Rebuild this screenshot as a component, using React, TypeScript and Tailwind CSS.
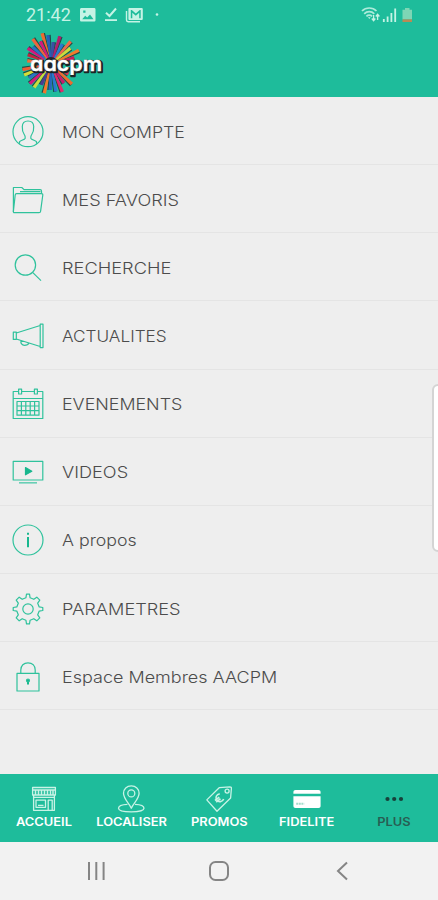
import type { ReactNode } from 'react';

interface MenuItem {
  label: string;
  icon: ReactNode;
  textClass: string;
}

interface TabItem {
  label: string;
  icon: ReactNode;
  textClass: string;
}

// [angle, inner radius, outer radius, colour]
const RAYS: [number, number, number, string][] = [
  [-172, 8, 24, '#e8743b'],
  [-158, 10, 25, '#c5223e'],
  [-146, 8, 28, '#d3187d'],
  [-137, 8, 25, '#2c6fc4'],
  [-126, 6, 31, '#f0643c'],
  [-106, 6, 32, '#ef6a2e'],
  [-115, 6, 25, '#d3187d'],
  [-96, 6, 29, '#2460b8'],
  [-84, 6, 22, '#3a4fa3'],
  [-72, 6, 29, '#b31d6e'],
  [-60, 6, 23, '#2b79cf'],
  [-49, 6, 30, '#ef6a4a'],
  [-39, 6, 25, '#c9dd3c'],
  [-26, 8, 31, '#f07a2c'],
  [-15, 8, 24, '#c71c5c'],
  [30, 6, 20, '#e0354f'],
  [44, 6, 29, '#ef6a2e'],
  [56, 6, 23, '#c71c6c'],
  [68, 6, 30, '#e02a6d'],
  [80, 6, 28, '#2b79cf'],
  [92, 6, 26, '#2a63bd'],
  [103, 6, 30, '#f0782c'],
  [115, 6, 23, '#4a3b93'],
  [126, 6, 29, '#c9dd3c'],
  [137, 6, 29, '#d3187d'],
  [148, 6, 26, '#2c6fc4'],
  [158, 8, 29, '#d5dc36'],
  [169, 8, 29, '#ee5b34'],
];

// cv11 is the single-storey a
const WORDMARK = "font-[Inter,sans-serif] text-[20px] font-semibold [font-feature-settings:'cv11'_1,'ss01'_1]";

function Logo() {
  return (
    <svg width="84" height="62" viewBox="0 0 84 62" aria-label="aacpm">
      <g transform="translate(30 31)">
        {RAYS.map(([angle, from, to, color]) => (
          <g key={angle} transform={`rotate(${angle})`}>
            <path d={`M${from} 0.6L${to} -0.6V2.8L${from} 1.6Z`} fill="#1d4e48" />
            <path d={`M${from} -0.8L${to} -1.8V1.6L${from} 1Z`} fill={color} />
          </g>
        ))}
        <circle r="7" fill="#23272e" />
      </g>
      <text
        x="10"
        y="38.7"
        textLength="72"
        lengthAdjust="spacingAndGlyphs"
        stroke="#1c2426"
        strokeWidth="2.6"
        strokeLinejoin="round"
        fill="#1c2426"
        className={WORDMARK}
      >
        aacpm
      </text>
      <text
        x="9"
        y="37.6"
        textLength="72"
        lengthAdjust="spacingAndGlyphs"
        fill="#fff"
        stroke="#fff"
        strokeWidth="0.4"
        className={WORDMARK}
      >
        aacpm
      </text>
    </svg>
  );
}

function LineIcon({ children }: { children: ReactNode }) {
  return (
    <svg
      width="32"
      height="32"
      viewBox="0 0 32 32"
      fill="none"
      stroke="#2fc29c"
      strokeWidth="1.2"
      strokeLinejoin="round"
      className="shrink-0"
    >
      {children}
    </svg>
  );
}

const GEAR =
  'M13.9 4.8L14.5 1.2H17.5L18.1 4.8L21.8 6.3L24.8 4.2L27.8 7.2L25.7 10.2L27.2 13.9L30.8 14.5V17.5L27.2 18.1L25.7 21.8L27.8 24.8L24.8 27.8L21.8 25.7L18.1 27.2L17.5 30.8H14.5L13.9 27.2L10.2 25.7L7.2 27.8L4.2 24.8L6.3 21.8L4.8 18.1L1.2 17.5V14.5L4.8 13.9L6.3 10.2L4.2 7.2L7.2 4.2L10.2 6.3Z';

const MENU: MenuItem[] = [
  {
    label: 'MON COMPTE',
    textClass: 'scale-x-[1.105]',
    icon: (
      <LineIcon>
        <circle cx="16" cy="15.7" r="15" />
        <path d="M7.5 27.8V25.8C8 24.4 12.5 24 13.2 22.2C13.7 20.5 13 19.4 12 18C10.5 16 10.2 13 10.3 10.5C10.4 7 12.6 5 16 5C19.4 5 21.6 7 21.7 10.5C21.8 13 21.5 16 20 18C19 19.4 18.3 20.5 18.8 22.2C19.5 24 24 24.4 24.5 25.8V27.8" />
      </LineIcon>
    ),
  },
  {
    label: 'MES FAVORIS',
    textClass: 'scale-x-[1.135]',
    icon: (
      <LineIcon>
        <path d="M1.4 28V3.5H9.8L12 5.6H28.2C29.2 5.6 29.5 6 29.5 7V9.6" />
        <path d="M4.6 9.6H29.4C30.5 9.6 30.9 10.2 30.8 11L28.6 27.2C28.5 28.2 28 28.7 27 28.7H2.4C1.6 28.7 1.3 28.2 1.4 27.2L3.2 11C3.3 10 3.8 9.6 4.6 9.6ZM8 7.6H28.5" />
      </LineIcon>
    ),
  },
  {
    label: 'RECHERCHE',
    textClass: 'scale-x-[1.14]',
    icon: (
      <LineIcon>
        <circle cx="13.4" cy="13" r="10.2" />
        <path d="M20.6 20.4L29 28.6" />
      </LineIcon>
    ),
  },
  {
    label: 'ACTUALITES',
    textClass: 'scale-x-[1.075]',
    icon: (
      <LineIcon>
        <path d="M1.3 12.2H4.3V19.4H1.3ZM4.3 13L28.2 5.5V26.5L4.3 19M28.2 4.2H31V27.6H28.2ZM9 20.6C8.4 23.2 10 25.3 12.4 25.3C14.6 25.3 16.4 24.4 16.8 23.3" />
      </LineIcon>
    ),
  },
  {
    label: 'EVENEMENTS',
    textClass: 'scale-x-[1.115]',
    icon: (
      <LineIcon>
        <path d="M6.5 3.5H1.2V30.5H30.8V3.5H25.5M9.8 3.5H22.2M1.2 10.5H30.8" />
        <path d="M6.6 1.2H9.6V6H6.6ZM22.4 1.2H25.4V6H22.4Z" />
        <path d="M5 13.5H27V27.2H5ZM5 18H27M5 22.6H27M9.4 13.5V27.2M13.8 13.5V27.2M18.2 13.5V27.2M22.6 13.5V27.2" />
      </LineIcon>
    ),
  },
  {
    label: 'VIDEOS',
    textClass: 'scale-x-[1.135]',
    icon: (
      <LineIcon>
        <path d="M1.2 5.4H30.8V24H1.2Z" />
        <path d="M7 26.8H25" strokeWidth="1.6" opacity="0.7" />
        <path d="M13.5 11.6L19.8 15.2L13.5 18.8Z" fill="#18b78e" stroke="#18b78e" />
      </LineIcon>
    ),
  },
  {
    label: 'A propos',
    textClass: 'scale-x-[1.11]',
    icon: (
      <LineIcon>
        <circle cx="16" cy="16" r="15" />
        <path d="M16 13V23.2M16 8.7V10.7" stroke="#18b78e" strokeWidth="2" />
      </LineIcon>
    ),
  },
  {
    label: 'PARAMETRES',
    textClass: 'scale-x-[1.135]',
    icon: (
      <LineIcon>
        <path d={GEAR} />
        <circle cx="16" cy="16" r="5.2" />
      </LineIcon>
    ),
  },
  {
    label: 'Espace Membres AACPM',
    textClass: 'scale-x-[1.125]',
    icon: (
      <LineIcon>
        <path d="M5 12.4H27V30H5ZM8.8 12.4V9C8.8 4.6 11.8 1.8 16 1.8C20.2 1.8 23.2 4.6 23.2 9V12.4" />
        <path d="M16 19V23.5" stroke="#18b78e" strokeWidth="2" />
        <circle cx="16" cy="19.5" r="1.5" fill="#18b78e" />
      </LineIcon>
    ),
  },
];

function TabIcon({ children }: { children: ReactNode }) {
  return (
    <svg width="28" height="28" viewBox="0 0 28 28" fill="none" stroke="#c9f3e6" strokeWidth="1.3" strokeLinejoin="round">
      {children}
    </svg>
  );
}

const TABS: TabItem[] = [
  {
    label: 'ACCUEIL',
    textClass: 'text-white',
    icon: (
      <TabIcon>
        <path d="M2.6 2.5H25.4V10H2.6ZM3.6 10V25.3H24.4V10M2.6 5H25.4" />
        <path d="M5.5 5V10M8.5 5V10M11.5 5V10M14.5 5V10M17.5 5V10M20.5 5V10M23 5V10" strokeWidth="1.5" />
        <path d="M3.5 12.4H24.5M6 15.2H15.5V22.3H6ZM18.2 25V15.2H22.2V25M8 20.4H13.5" />
      </TabIcon>
    ),
  },
  {
    label: 'LOCALISER',
    textClass: 'text-white',
    icon: (
      <TabIcon>
        <path d="M14.3 23.2C12 18.5 6.5 13.6 6.5 8.3C6.5 3.8 9.8 0.9 14.3 0.9C18.8 0.9 22.1 3.8 22.1 8.3C22.1 13.6 16.6 18.5 14.3 23.2Z" />
        <circle cx="14.3" cy="8.4" r="3.5" />
        <path d="M10.5 19.4C5 19.6 1.5 21 1.5 23.2C1.5 25.6 7 26.8 14.2 26.8C21.4 26.8 27 25.6 27 23.2C27 21 23.5 19.6 18 19.4" />
      </TabIcon>
    ),
  },
  {
    label: 'PROMOS',
    textClass: 'text-white',
    icon: (
      <TabIcon>
        <path d="M1.8 14.9L14.2 2.7L24.9 1.8C26 1.8 26.5 2.5 26.4 3.5L25.6 13L12 26.2Z" />
        <circle cx="22.1" cy="6.1" r="2" />
        <g transform="rotate(-38 14 13.5)" strokeWidth="1.6">
          <path d="M17.4 10.3C14.6 8.6 11.2 10.4 11.2 13.5C11.2 16.6 14.6 18.4 17.4 16.7M9.6 12.6H15M9.6 14.6H15" />
        </g>
      </TabIcon>
    ),
  },
  {
    label: 'FIDELITE',
    textClass: 'text-white',
    icon: (
      <TabIcon>
        <path d="M2.5 5H25.5C26.8 5 27.6 5.8 27.6 7V8.8H0.4V7C0.4 5.8 1.2 5 2.5 5Z" fill="#fff" stroke="none" />
        <path d="M0.4 11.3H27.6V21C27.6 22.3 26.8 23 25.5 23H2.5C1.2 23 0.4 22.3 0.4 21Z" fill="#fff" stroke="none" />
        <path d="M3.2 18.8H11.2" stroke="#a4dccb" strokeWidth="2" strokeDasharray="2 0.6" />
      </TabIcon>
    ),
  },
  {
    label: 'PLUS',
    textClass: 'text-[#285e53]',
    icon: (
      <TabIcon>
        <g fill="#17413a" stroke="none">
          <circle cx="7.5" cy="14" r="2.1" />
          <circle cx="14.2" cy="14" r="2.1" />
          <circle cx="21" cy="14" r="2.1" />
        </g>
      </TabIcon>
    ),
  },
];

function StatusBar() {
  return (
    <div className="flex h-[30px] items-center pl-[26px] pr-[25px] text-[#c5f3e5]">
      <span className="w-[54px] font-[Roboto,sans-serif] text-[18px] leading-[30px]">21:42</span>
      <svg width="80" height="16" viewBox="0 0 80 16" fill="currentColor">
        <path fillRule="evenodd" d="M1.5 1H14C15 1 15.5 1.5 15.5 2.5V13C15.5 14 15 14.5 14 14.5H1.5C0.7 14.5 0 14 0 13V2.5C0 1.5 0.7 1 1.5 1ZM2.2 12.2H13.5L10 7.5L7.2 10.6L5.2 8.8ZM3.2 3.5V5.8H5.5V3.5Z" />
        <path d="M26 5.8L29.5 9L36 1.5" fill="none" stroke="currentColor" strokeWidth="2" />
        <path d="M25 12.2H37V14H25Z" />
        <path d="M46.5 4V13C46.5 14.2 47 14.7 48.2 14.7H60" fill="none" stroke="currentColor" strokeWidth="1.4" />
        <path fillRule="evenodd" d="M49.5 1H61.5C62.3 1 62.8 1.5 62.8 2.3V11.7C62.8 12.5 62.3 13 61.5 13H49.5C48.8 13 48.4 12.5 48.4 11.7V2.3C48.4 1.5 48.8 1 49.5 1ZM50.8 3V11.2H52.3V5.8L55.8 8.7L59.2 5.8V11.2H60.7V3H59.8L55.8 6.4L51.8 3Z" />
        <circle cx="77" cy="7.5" r="1.3" />
      </svg>
      <svg width="52" height="18" viewBox="0 0 52 18" className="ml-auto" fill="none" stroke="currentColor">
        <path d="M1 5C5 1 11.5 1 15.5 5M3.2 7.8C6 5 10.5 5 13.3 7.8M5.4 10.4C7 8.8 9.5 8.8 11.1 10.4" strokeWidth="1.7" opacity="0.85" />
        <path d="M7 11.2H9.6L8.3 13Z" fill="currentColor" stroke="none" />
        <path d="M12.6 9V14.5M10.8 12.5L12.6 14.8L14.3 12.5M16.6 14V8.5M14.8 10.5L16.6 8.3L18.4 10.5" strokeWidth="1.3" />
        <path d="M22.8 13V16M26.6 10.5V16M30.4 7V16M34.2 2.5V16" strokeWidth="1.8" />
        <path d="M41.5 3.8H44V2H48.5V3.8H51V13.4H41.5Z" fill="#7ed6b5" stroke="none" />
        <path d="M41.5 13.4H51V16H41.5Z" fill="#b98a55" stroke="none" />
      </svg>
    </div>
  );
}

export default function App() {
  return (
    <div className="relative flex h-[900px] w-[438px] flex-col overflow-hidden bg-[#eeeeee] font-[Inter,sans-serif]">
      <header className="h-[97px] shrink-0 bg-[#1ebc9b]">
        <StatusBar />
        <div className="pl-[21px] pt-[3px]">
          <Logo />
        </div>
      </header>

      <ul className="flex-1">
        {MENU.map((item) => (
          <li key={item.label} className="flex h-[68.15px] items-center border-b border-[#e4e4e4] pl-3 pt-[2px]">
            {item.icon}
            <span
              className={`ml-[17.5px] origin-left whitespace-nowrap text-[16px] font-light text-[#4c4c4c] ${item.textClass}`}
            >
              {item.label}
            </span>
          </li>
        ))}
      </ul>

      <nav className="grid h-[68px] shrink-0 grid-cols-5 bg-[#1ebc9b]">
        {TABS.map((tab) => (
          <div key={tab.label} className="flex flex-col items-center pt-[11px]">
            {tab.icon}
            <span className={`mt-px scale-x-[1.12] text-[11.5px] font-semibold leading-[17px] ${tab.textClass}`}>
              {tab.label}
            </span>
          </div>
        ))}
      </nav>

      {/* Android navigation keys */}
      <div className="flex h-[58px] shrink-0 items-center bg-[#f2f2f2] pl-[86px]">
        <svg width="20" height="20" viewBox="0 0 20 20" stroke="#858585" strokeWidth="2">
          <path d="M3 1V19M10.3 1V19M17.6 1V19" />
        </svg>
        <svg width="22" height="22" viewBox="0 0 22 22" fill="none" stroke="#858585" strokeWidth="2" className="ml-[102px]">
          <rect x="2" y="2" width="18" height="18" rx="5.5" />
        </svg>
        <svg width="14" height="20" viewBox="0 0 14 20" fill="none" stroke="#858585" strokeWidth="2" className="ml-[105px]">
          <path d="M12 1.5L3 10L12 18.5" />
        </svg>
      </div>

      {/* Edge panel handle */}
      <div className="absolute -right-2 top-[384px] h-[168px] w-[14px] rounded-[6px] border-2 border-[#d4d4d4] bg-white" />
    </div>
  );
}
